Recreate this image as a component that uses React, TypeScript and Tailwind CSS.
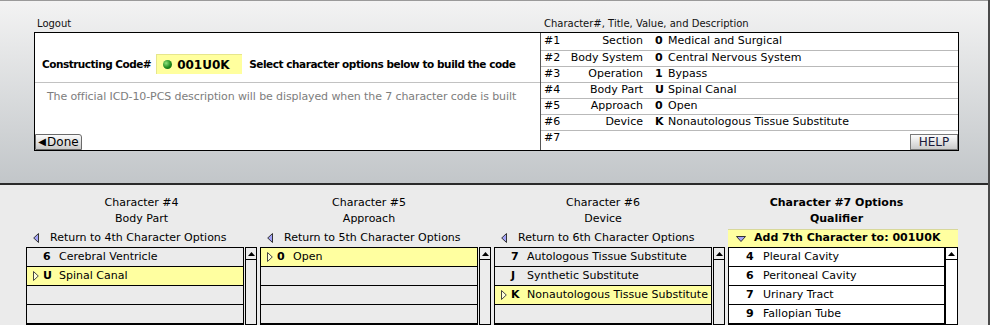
import React from "react";

type Item = { code?: string; text?: string; sel?: boolean };

const summary = [
  ["#1", "Section", "0", "Medical and Surgical"],
  ["#2", "Body System", "0", "Central Nervous System"],
  ["#3", "Operation", "1", "Bypass"],
  ["#4", "Body Part", "U", "Spinal Canal"],
  ["#5", "Approach", "0", "Open"],
  ["#6", "Device", "K", "Nonautologous Tissue Substitute"],
];

const columns: { title: string; sub: string; back: string; items: Item[]; first?: boolean }[] = [
  {
    title: "Character #4",
    sub: "Body Part",
    back: "Return to 4th Character Options",
    first: true,
    items: [{ code: "6", text: "Cerebral Ventricle" }, { code: "U", text: "Spinal Canal", sel: true }, {}, {}],
  },
  {
    title: "Character #5",
    sub: "Approach",
    back: "Return to 5th Character Options",
    items: [{ code: "0", text: "Open", sel: true }, {}, {}, {}],
  },
  {
    title: "Character #6",
    sub: "Device",
    back: "Return to 6th Character Options",
    items: [
      { code: "7", text: "Autologous Tissue Substitute" },
      { code: "J", text: "Synthetic Substitute" },
      { code: "K", text: "Nonautologous Tissue Substitute", sel: true },
      {},
    ],
  },
];

const qualifiers = [
  { code: "4", text: "Pleural Cavity" },
  { code: "6", text: "Peritoneal Cavity" },
  { code: "7", text: "Urinary Tract" },
  { code: "9", text: "Fallopian Tube" },
];

const BackArrow = () => (
  <svg width="6" height="10" viewBox="0 0 6 10" className="shrink-0">
    <path d="M5.5 0.5 L0.7 5 L5.5 9.5 Z" fill="#a3a3f7" stroke="#333" strokeWidth="1" />
  </svg>
);

const SelArrow = () => (
  <svg width="6" height="10" viewBox="0 0 6 10" className="shrink-0">
    <path d="M0.5 0.5 L5.3 5 L0.5 9.5 Z" fill="#ffffd8" stroke="#444" strokeWidth="1" />
  </svg>
);

const DownArrow = () => (
  <svg width="10" height="6" viewBox="0 0 10 6" className="shrink-0">
    <path d="M0.5 0.5 L9.5 0.5 L5 5.5 Z" fill="#a3a3f7" stroke="#333" strokeWidth="1" />
  </svg>
);

const Scrollbar = ({ white }: { white?: boolean }) => (
  <div className={`flex flex-col flex-1 border border-black ${white ? "bg-white" : "bg-[#ececec]"}`}>
    <div className="h-[12px] border-b border-black flex items-center justify-center">
      <svg width="7" height="4" viewBox="0 0 7 4">
        <path d="M0 4 L3.5 0 L7 4 Z" fill="#000" />
      </svg>
    </div>
  </div>
);

const OptionColumn = ({ col }: { col: (typeof columns)[number] }) => (
  <div className="w-[231px] flex flex-col">
    <div className={`text-center leading-[16px] ${col.first ? "" : "pr-[13px]"}`}>
      <div>{col.title}</div>
      <div>{col.sub}</div>
    </div>
    <div className="mt-[2px] h-[19px] flex items-center pl-[7px]">
      <BackArrow />
      <span className="ml-[11px]">{col.back}</span>
    </div>
    <div className="flex flex-1">
      <div className="w-[218px] border border-black">
        {col.items.map((it, i) => (
          <div
            key={i}
            className={`h-[19px] border-b border-black flex items-center whitespace-nowrap overflow-hidden ${
              it.sel ? "bg-[#ffffa0]" : ""
            }`}
          >
            <div className="w-[16px] pl-[6px] flex">{it.sel && <SelArrow />}</div>
            <span className="w-[16px] font-bold">{it.code}</span>
            <span>{it.text}</span>
          </div>
        ))}
      </div>
      <div className="ml-[1px] w-[12px] flex flex-col">
        <Scrollbar />
      </div>
    </div>
  </div>
);

export default function App() {
  return (
    <div className="w-[990px] h-[325px] overflow-hidden flex flex-col border-r-2 border-[#4a4a4a] font-['DejaVu_Sans',sans-serif] text-[11px] text-black">
      {/* upper panel */}
      <div className="h-[185px] shrink-0 border-t border-[#9a9a9a] border-b-2 border-b-[#2a2a2a] bg-gradient-to-b from-[#f3f3f3] to-[#c2c6c9] pl-[34px] pt-[15px]">
        <div className="flex h-[16px] leading-[16px] text-[10px] text-[#111]">
          <span className="w-[506px] pl-[3px]">Logout</span>
          <span className="pl-[4px]">Character#, Title, Value, and Description</span>
        </div>
        <div className="w-[925px] h-[119px] border border-black bg-white flex">
          <div className="w-[505px] shrink-0 flex flex-col">
            <div className="h-[50px] border-b border-[#c2c2c2] flex items-end pb-[8px] pl-[7px] whitespace-nowrap">
              <span className="font-bold text-[10.5px] tracking-[-0.5px] leading-[20px]">Constructing Code#</span>
              <div className="ml-[5px] w-[86px] h-[20px] shrink-0 bg-[#ffff9e] border-t border-l border-[#e6e68c] flex items-center pl-[6px]">
                <div className="w-[9px] h-[9px] rounded-full bg-[radial-gradient(circle_at_35%_35%,#8fe27a,#1f8a1f_55%,#0b4d0b)]" />
                <span className="ml-[5px] font-bold text-[12px]">001U0K</span>
              </div>
              <span className="ml-[7px] font-bold text-[10.5px] tracking-[-0.45px] leading-[20px]">
                Select character options below to build the code
              </span>
            </div>
            <div className="pt-[6px] pr-[12px] text-center leading-[16px] text-[#7d7d7d] whitespace-nowrap tracking-[-0.1px]">
              The official ICD-10-PCS description will be displayed when the 7 character code is built
            </div>
            <div className="mt-auto flex">
              <button className="h-[16px] w-[47px] border border-[#6a6a6a] rounded-tr-[3px] bg-gradient-to-b from-[#fbfbfb] to-[#c9c9c9] flex items-center justify-center leading-[14px] text-[12px]">
                <span className="text-[10px] mr-[1px]">◀</span>Done
              </button>
            </div>
          </div>
          <div className="flex-1 border-l border-[#555] flex flex-col">
            {summary.map((r, i) => (
              <div
                key={r[0]}
                className={`${i === 0 ? "h-[18px]" : "h-[16px]"} border-b border-[#b9b9b9] flex items-center whitespace-nowrap`}
              >
                <span className="w-[27px] pl-[3px]">{r[0]}</span>
                <span className="w-[75px] text-right">{r[1]}</span>
                <span className="w-[25px] pl-[12px] font-bold">{r[2]}</span>
                <span>{r[3]}</span>
              </div>
            ))}
            <div className="flex-1 flex justify-between">
              <span className="pl-[3px] leading-[14px]">#7</span>
              <button className="self-end h-[16px] w-[48px] border border-[#7a7a7a] bg-gradient-to-b from-[#fdfdfd] to-[#cbcbcb] text-[12px] leading-[14px] text-[#1a1a3a]">
                HELP
              </button>
            </div>
          </div>
        </div>
      </div>

      {/* lower panel */}
      <div className="flex-1 bg-[#ebebeb] pt-[10px] pl-[26px] flex gap-[3px] overflow-hidden">
        {columns.map((c) => (
          <OptionColumn key={c.title} col={c} />
        ))}
        <div className="w-[230px] flex flex-col">
          <div className="text-center leading-[16px] pr-[13px] font-bold">
            <div>Character #7 Options</div>
            <div>Qualifier</div>
          </div>
          <div className="mt-[2px] h-[19px] bg-[#ffffa0] border-t border-[#d8d89a] flex items-center pl-[8px]">
            <DownArrow />
            <span className="ml-[8px] font-bold">Add 7th Character to: 001U0K</span>
          </div>
          <div className="flex flex-1">
            <div className="w-[217px] border border-black bg-white">
              {qualifiers.map((q) => (
                <div key={q.code} className="h-[19px] border-b border-black flex items-center whitespace-nowrap">
                  <span className="w-[34px] pl-[17px] font-bold">{q.code}</span>
                  <span>{q.text}</span>
                </div>
              ))}
            </div>
            <div className="w-[13px] flex flex-col">
              <Scrollbar white />
            </div>
          </div>
        </div>
      </div>
    </div>
  );
}
